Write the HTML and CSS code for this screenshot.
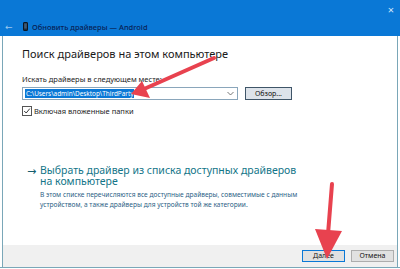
FILE: index.html
```html
<!DOCTYPE html>
<html lang="ru">
<head>
<meta charset="UTF-8" />
<title>Обновить драйверы — Android</title>
<link rel="stylesheet" href="styles.css">
</head>
<body>
<div class="window">
  <header class="titlebar">
    <div class="title-row">
      <span class="back">&#8592;</span>
      <svg class="devicon" width="5" height="9" viewBox="0 0 5 9"><rect x="0.5" y="0.5" width="4" height="8" rx="0.6" fill="#1b2a3a" stroke="#0b1520"/><rect x="1.2" y="1.4" width="2.6" height="5.2" fill="#3d5a75"/></svg>
      <span class="title">Обновить драйверы — Android</span>
    </div>
    <span class="close">&#215;</span>
  </header>

  <main class="content">
    <h1>Поиск драйверов на этом компьютере</h1>
    <label class="field-label">Искать драйверы в следующем месте:</label>
    <div class="path-row">
      <div class="combo">
        <span class="selected">C:\Users\admin\Desktop\ThirdParty</span>
        <svg class="chev" width="7" height="5" viewBox="0 0 7 5"><path d="M0.5 1 L3.5 4 L6.5 1" fill="none" stroke="#555" stroke-width="0.8"/></svg>
      </div>
      <button class="btn browse">Обзор...</button>
    </div>
    <div class="check-row">
      <span class="checkbox"><svg width="8" height="8" viewBox="0 0 8 8"><path d="M1.2 4 L3.2 6 L6.8 1.6" fill="none" stroke="#222" stroke-width="0.9"/></svg></span>
      <span>Включая вложенные папки</span>
    </div>

    <div class="pick">
      <span class="pick-arrow">&#8594;</span>
      <div class="pick-body">
        <div class="pick-link">Выбрать драйвер из списка доступных драйверов на компьютере</div>
        <p class="pick-desc">В этом списке перечисляются все доступные драйверы, совместимые с данным устройством, а также драйверы для устройств той же категории.</p>
      </div>
    </div>
  </main>

  <footer class="footer">
    <button class="btn next">Далее</button>
    <button class="btn">Отмена</button>
  </footer>
</div>

<!-- red pointer arrows over the screenshot -->
<svg class="marks" width="400" height="269" viewBox="0 0 400 269">
  <line x1="214" y1="58" x2="144" y2="89" stroke="#e8424f" stroke-width="4" stroke-linecap="round"/>
  <polygon points="131,94 142,81 150,98" fill="#e8424f"/>
  <line x1="332" y1="184" x2="328" y2="234" stroke="#e8424f" stroke-width="4" stroke-linecap="round"/>
  <polygon points="315,229 342,231 327,259" fill="#e8424f"/>
</svg>
</body>
</html>
```

FILE: styles.css
```css
body {
  margin: 0;
  font-family: "Noto Sans", "DejaVu Sans", sans-serif;
  background: #fff;
  width: 400px;
  height: 269px;
  overflow: hidden;
  position: relative;
}
.window {
  display: flex;
  flex-direction: column;
  height: 267px;
  border-bottom: 1px solid #7aa7b8;
}
.titlebar {
  background: #0a78d6;
  height: 36px;
  display: flex;
  justify-content: space-between;
  align-items: flex-start;
  padding: 0 5px 0 5px;
  box-sizing: border-box;
}
.title-row {
  display: flex;
  align-items: center;
  gap: 6px;
  margin-top: 20px;
}
.back {
  color: #9cc8ef;
  font-size: 9px;
  width: 12px;
}
.title {
  color: #082257;
  font-size: 7.5px;
  font-weight: 500;
  margin-left: -2px;
}
.close {
  color: #cfe6fb;
  font-size: 11px;
  margin-top: 2px;
  margin-right: 1px;
}

.content {
  flex: 1;
  margin: 0 2px;
  border-left: 1px solid #7aa7b8;
  border-right: 1px solid #7aa7b8;
  padding: 0 0 0 19px;
}
h1 {
  font-weight: normal;
  font-size: 11px;
  color: #1a1a1a;
  margin: 11px 0 0;
  line-height: 14px;
}
.field-label {
  display: block;
  font-size: 7.5px;
  color: #222;
  margin-top: 13px;
  line-height: 10px;
}
.path-row {
  display: flex;
  align-items: center;
  gap: 7px;
  margin-top: 3px;
}
.combo {
  width: 209px;
  height: 11px;
  border: 1px solid #8aa6bb;
  display: flex;
  align-items: center;
  justify-content: space-between;
  padding: 0 3px 0 2px;
  box-sizing: content-box;
}
.selected {
  background: #0a78d6;
  color: #fff;
  font-size: 6.4px;
  line-height: 9px;
  padding: 0 1px;
}
.btn {
  font-family: inherit;
  font-size: 7px;
  background: #e1e1e1;
  border: 1px solid #adadad;
  color: #111;
  padding: 0;
  height: 12px;
  width: 43px;
  line-height: 10px;
}
.browse {
  width: 47px;
  height: 13px;
  border-color: #3f5568;
  background: #dde3ea;
}
.check-row {
  display: flex;
  align-items: center;
  gap: 2px;
  font-size: 7.5px;
  color: #222;
  margin-top: 6px;
}
.checkbox {
  width: 8px;
  height: 8px;
  border: 1px solid #555;
  display: flex;
}

.pick {
  display: flex;
  margin-top: 49px;
  padding-left: 5px;
}
.pick-arrow {
  color: #155d6e;
  font-size: 11px;
  width: 13px;
  line-height: 11px;
}
.pick-body {
  width: 262px;
}
.pick-link {
  color: #137588;
  font-size: 10.5px;
  line-height: 11px;
}
.pick-desc {
  margin: 3px 0 0;
  color: #2d5f86;
  font-size: 6.6px;
  line-height: 10px;
  width: 262px;
}

.footer {
  height: 22px;
  margin: 0 2px;
  background: #f0f0f0;
  border-left: 1px solid #7aa7b8;
  border-right: 1px solid #7aa7b8;
  display: flex;
  justify-content: flex-end;
  align-items: center;
  gap: 6px;
  padding-right: 3px;
}
.next {
  border-color: #0a78d6;
}
.marks {
  position: absolute;
  left: 0;
  top: 0;
}
```
